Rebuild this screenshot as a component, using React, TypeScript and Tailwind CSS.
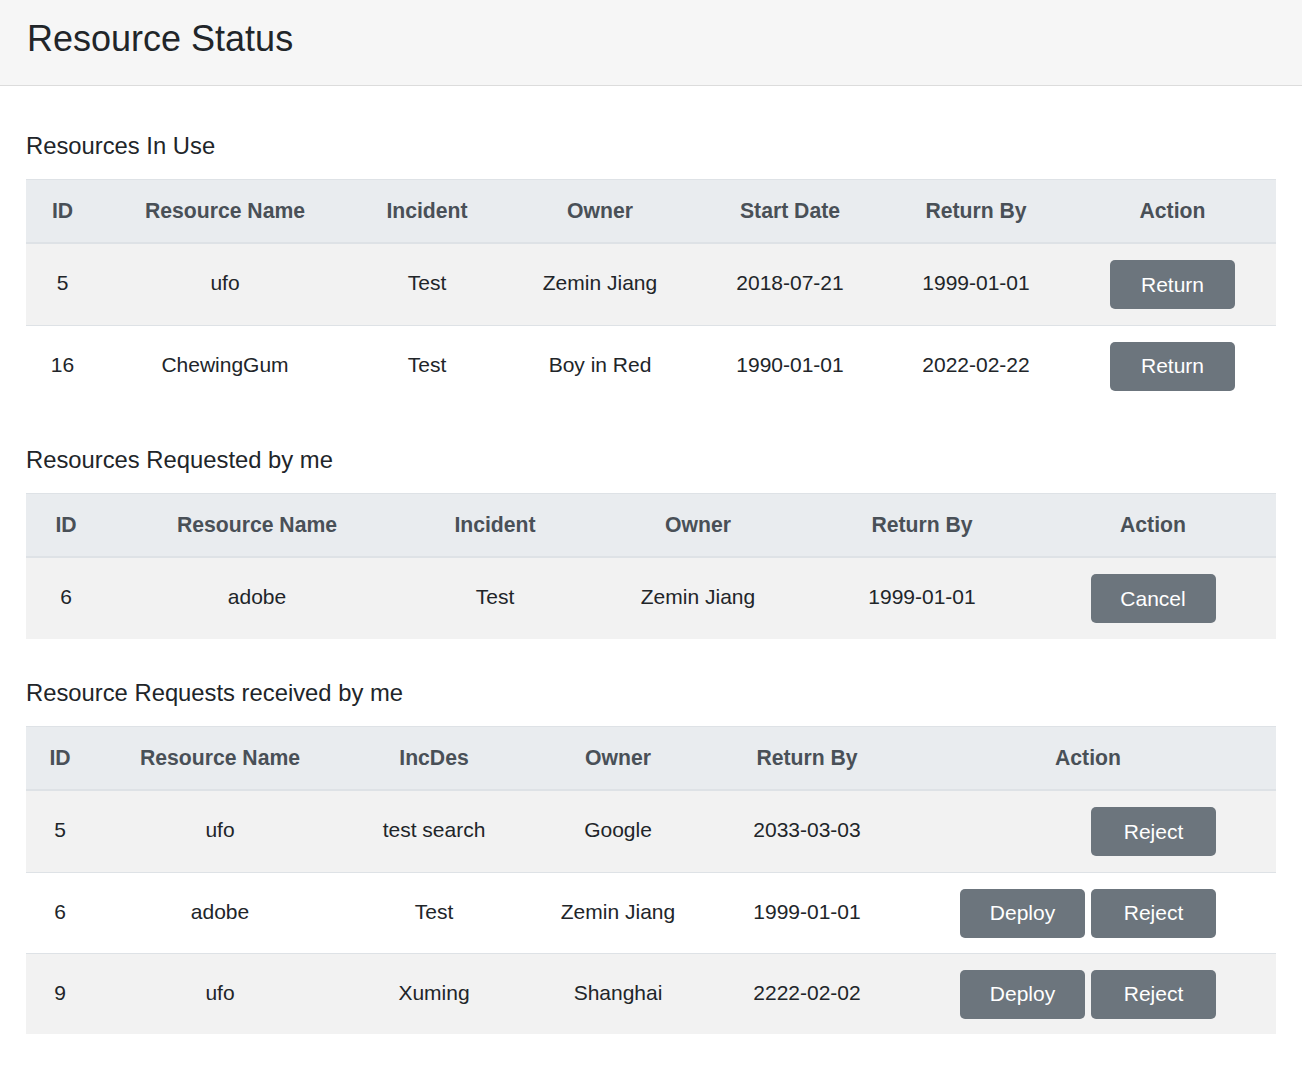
import React from "react";

function Btn({ label, hidden }: { label: string; hidden?: boolean }) {
  return (
    <button
      className={
        "w-[125px] h-[49px] rounded-[5px] bg-[#6c757d] text-white text-[21px] leading-[46px]" +
        (hidden ? " invisible" : "")
      }
    >
      {label}
    </button>
  );
}

function Table({
  cols,
  headers,
  rows,
}: {
  cols: string;
  headers: string[];
  rows: React.ReactNode[][];
}) {
  return (
    <div className="w-full">
      <div
        className="grid bg-[#e9ecef] border-t border-[#dee2e6] border-b-2 h-[65px] items-center"
        style={{ gridTemplateColumns: cols }}
      >
        {headers.map((h, i) => (
          <div key={i} className="text-center font-bold text-[21.2px] text-[#495057]">
            {h}
          </div>
        ))}
      </div>
      {rows.map((r, ri) => (
        <div
          key={ri}
          className={
            "grid items-center h-[81px] " +
            (ri === 0 ? "" : "border-t border-[#dee2e6] ") +
            (ri % 2 === 0 ? "bg-[#f2f2f2]" : "bg-white")
          }
          style={{ gridTemplateColumns: cols }}
        >
          {r.map((c, ci) =>
            typeof c === "string" ? (
              <div key={ci} className="text-center text-[21px] text-[#212529] pb-[3px]">
                {c}
              </div>
            ) : (
              <div key={ci}>{c}</div>
            )
          )}
        </div>
      ))}
    </div>
  );
}

export default function App() {
  const t1 = "73px 252px 152px 194px 186px 186px 207px";
  const t2 = "80px 302px 174px 232px 216px 246px";
  const t3 = "68px 252px 176px 192px 186px 376px";
  return (
    <div
      className="min-h-screen bg-white text-[#212529]"
      style={{ fontFamily: '"Liberation Sans", Arial, sans-serif' }}
    >
      <header className="h-[86px] bg-[#f6f6f6] border-b border-[#dcdcdc] px-[27px] pt-[18px]">
        <h1 className="text-[36px] leading-[42px] font-normal">Resource Status</h1>
      </header>
      <main className="px-[26px] pt-[45px] pb-[40px]">
        <h2 className="text-[23.8px] leading-[29px] mb-[19px]">Resources In Use</h2>
        <Table
          cols={t1}
          headers={["ID", "Resource Name", "Incident", "Owner", "Start Date", "Return By", "Action"]}
          rows={[
            ["5", "ufo", "Test", "Zemin Jiang", "2018-07-21", "1999-01-01", <div className="flex justify-center"><Btn label="Return" /></div>],
            ["16", "ChewingGum", "Test", "Boy in Red", "1990-01-01", "2022-02-22", <div className="flex justify-center"><Btn label="Return" /></div>],
          ]}
        />
        <h2 className="text-[23.8px] leading-[29px] mb-[19px] mt-[39px]">Resources Requested by me</h2>
        <Table
          cols={t2}
          headers={["ID", "Resource Name", "Incident", "Owner", "Return By", "Action"]}
          rows={[
            ["6", "adobe", "Test", "Zemin Jiang", "1999-01-01", <div className="flex justify-center"><Btn label="Cancel" /></div>],
          ]}
        />
        <h2 className="text-[23.8px] leading-[29px] mb-[19px] mt-[39px]">Resource Requests received by me</h2>
        <Table
          cols={t3}
          headers={["ID", "Resource Name", "IncDes", "Owner", "Return By", "Action"]}
          rows={[
            ["5", "ufo", "test search", "Google", "2033-03-03", <div className="flex justify-center gap-[6px]"><Btn label="Deploy" hidden /><Btn label="Reject" /></div>],
            ["6", "adobe", "Test", "Zemin Jiang", "1999-01-01", <div className="flex justify-center gap-[6px]"><Btn label="Deploy" /><Btn label="Reject" /></div>],
            ["9", "ufo", "Xuming", "Shanghai", "2222-02-02", <div className="flex justify-center gap-[6px]"><Btn label="Deploy" /><Btn label="Reject" /></div>],
          ]}
        />
      </main>
    </div>
  );
}
